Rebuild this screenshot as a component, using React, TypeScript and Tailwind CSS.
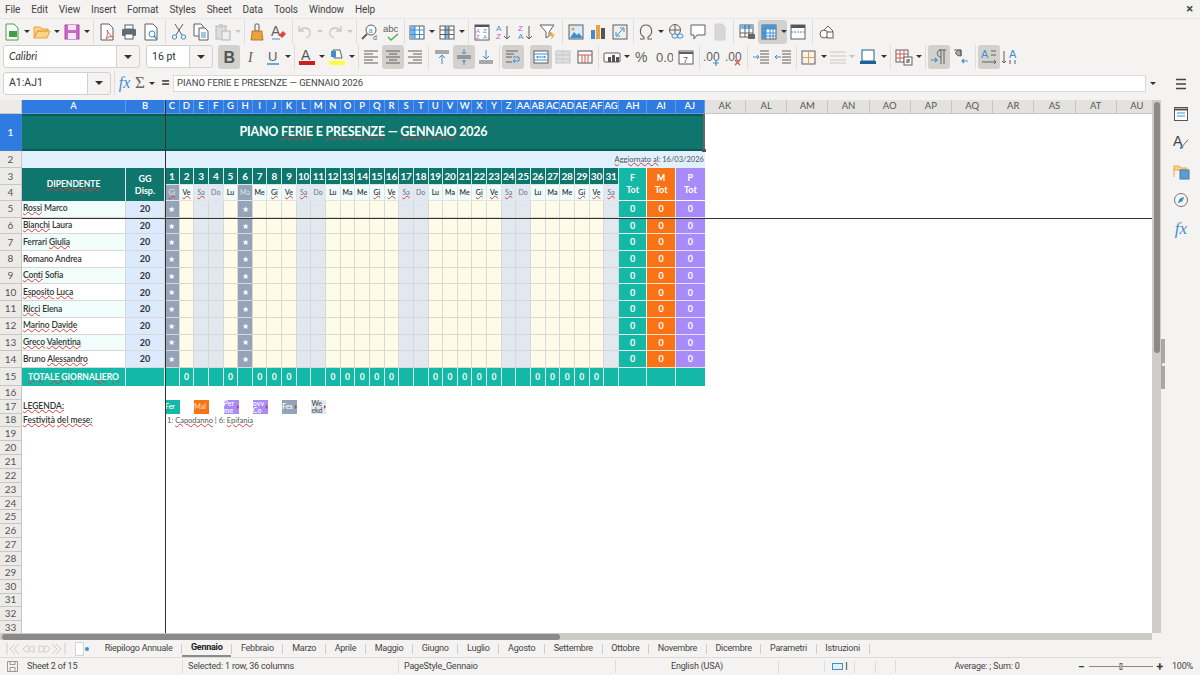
import React from 'react';

const UI = "font-['Roboto',sans-serif]";
const Svg = ({ children, s = 18 }: { children: React.ReactNode; s?: number }) => (
  <svg width={s} height={s} viewBox="0 0 18 18" fill="none" strokeWidth="1">{children}</svg>
);

const G = '#5f5f5f', B = '#3f8fd0', O = '#e8a33d';

// toolbar glyphs
const icons: Record<string, React.ReactNode> = {
  newdoc: <><path d="M3 1h8l4 4v12H3z" fill="#fff" stroke="#43a047" /><rect x="6" y="8" width="8" height="6" fill="#43a047" /></>,
  open: <path d="M1 15V4h6l2 2h6v2H5l-4 7 3-7h13l-3 7z" fill="#fbd38d" stroke={O} />,
  save: <><rect x="2" y="2" width="14" height="14" fill="#c868c8" stroke="#a84ca8" /><rect x="5" y="2" width="8" height="5" fill="#f5e6f5" /><rect x="5" y="10" width="8" height="6" fill="#f5e6f5" /></>,
  pdf: <><path d="M3 1h8l4 4v12H3z" fill="#fff" stroke={G} /><path d="M8 16c2-5 2-7 1-9 2 4 4 6 6 7-3-1-5 0-7 2z" stroke="#d9534f" /></>,
  print: <><rect x="5" y="2" width="8" height="4" fill="#fff" stroke={G} /><rect x="2" y="6" width="14" height="7" rx="1" fill="#5f6b76" /><rect x="5" y="11" width="8" height="5" fill="#fff" stroke={G} /></>,
  preview: <><path d="M3 1h8l4 4v12H3z" fill="#fff" stroke={G} /><circle cx="10" cy="11" r="3" stroke={B} /><path d="M12 13l3 3" stroke={B} strokeWidth="1.5" /></>,
  cut: <><path d="M5 1l7 11M13 1L6 12" stroke={G} /><circle cx="4.5" cy="14" r="2.2" stroke={B} /><circle cx="13.5" cy="14" r="2.2" stroke={B} /></>,
  copy: <><path d="M2 1h7l2 2v10H2z" fill="#fff" stroke={G} /><path d="M7 5h6l3 3v9H7z" fill="#fff" stroke={G} /><path d="M9 10h5M9 12h5M9 14h5" stroke={B} /></>,
  paste: <><rect x="2" y="3" width="10" height="13" fill="#ddd" stroke="#b5b5b5" /><rect x="5" y="1" width="4" height="4" fill="#ccc" /><rect x="8" y="8" width="8" height="9" fill="#eee" stroke="#b5b5b5" /></>,
  clone: <><rect x="7" y="1" width="4" height="7" rx="1" stroke={G} /><path d="M4 8h10v2l1 7H3l1-7z" fill={O} stroke="#b97a20" /></>,
  clear: <><text x="1" y="13" fontSize="14" fill={G} fontFamily="Liberation Sans">A</text><path d="M9 12l4-4 3 3-4 4z" fill="#e2453c" /><path d="M2 16h8" stroke={B} /></>,
  undo: <path d="M3 3v5h5M3 8c3-4 9-4 11 0 1 3-1 6-4 7" stroke="#c9c9c9" strokeWidth="1.3" />,
  redo: <path d="M15 3v5h-5M15 8c-3-4-9-4-11 0-1 3 1 6 4 7" stroke="#c9c9c9" strokeWidth="1.3" />,
  find: <><circle cx="10" cy="7" r="5" stroke={G} fill="#fff" /><path d="M6 11l-5 5" stroke={G} strokeWidth="2" /><text x="7.5" y="9.5" fontSize="7" fill={B} fontFamily="Liberation Sans">a</text><text x="12" y="17" fontSize="7" fill={G} fontFamily="Liberation Sans">d</text></>,
  spell: <><text x="0" y="9" fontSize="9.5" fill={G} fontFamily="Liberation Sans">abc</text><path d="M5 14l3 3 7-6" stroke="#4caf50" strokeWidth="1.4" /></>,
  table: <><rect x="2" y="3" width="14" height="13" fill="#fff" stroke={G} /><rect x="2" y="3" width="5" height="13" fill="#7cb6e6" /><path d="M2 7h14M2 11.500h14M7 3v13M11.500 3v13" stroke={B} /></>,
  cols: <><rect x="2" y="3" width="14" height="13" fill="#fff" stroke={G} /><rect x="7" y="3" width="4" height="13" fill="#7cb6e6" /><path d="M2 7h14M2 11.500h14M7 3v13M11 3v13" stroke={G} /></>,
  sort: <><rect x="2" y="2" width="14" height="15" fill="#fff" stroke={G} /><rect x="2" y="2" width="14" height="2" fill="#555" /><text x="3" y="10" fontSize="6" fill="#c060c0" fontFamily="Liberation Sans">A</text><text x="10" y="10" fontSize="6" fill={B} fontFamily="Liberation Sans">Z</text><text x="3" y="16" fontSize="6" fill="#c060c0" fontFamily="Liberation Sans">Z</text><text x="10" y="16" fontSize="6" fill={B} fontFamily="Liberation Sans">A</text></>,
  asc: <><text x="1" y="8" fontSize="8" fill={B} fontFamily="Liberation Sans">A</text><text x="1" y="16" fontSize="8" fill="#c060c0" fontFamily="Liberation Sans">Z</text><path d="M12 3v13M9 13l3 3 3-3" stroke={G} /></>,
  desc: <><text x="1" y="8" fontSize="8" fill="#c060c0" fontFamily="Liberation Sans">Z</text><text x="1" y="16" fontSize="8" fill={B} fontFamily="Liberation Sans">A</text><path d="M12 3v13M9 13l3 3 3-3" stroke={G} /></>,
  filter: <><path d="M1 2h14l-5 7v4l-3 2V9z" fill="#fff" stroke={G} /><path d="M11 9l3 1-1 2 3-1-4 6 1-4-3 0z" fill={O} /></>,
  image: <><rect x="2" y="2" width="14" height="14" fill="#dbeaf7" stroke={G} /><path d="M3 15l4-6 3 3 2-2 4 5z" fill={B} /><circle cx="6" cy="6" r="1.500" fill={O} /></>,
  chart: <><rect x="2" y="7" width="4" height="9" fill={B} /><rect x="7" y="2" width="4" height="14" fill={O} /><rect x="12" y="5" width="4" height="11" fill="#555" /></>,
  pivot: <><rect x="2" y="2" width="14" height="14" fill="#eee" stroke={G} /><path d="M6 12l6-6M9 5h4v4M5 9v4h4" stroke={B} /></>,
  omega: <path d="M3 16h4v-2c-6-3-4-12 2-12s8 9 2 12v2h4" stroke={G} strokeWidth="1.100" />,
  link: <><circle cx="8" cy="7" r="5.500" stroke={G} /><path d="M3 7h10M8 1.500v11" stroke={G} /><rect x="5" y="11" width="6" height="4" rx="2" fill="#f4f3f1" stroke={B} /><rect x="10" y="11" width="6" height="4" rx="2" stroke={B} /></>,
  comment: <path d="M2 2h14v10H8l-3 4v-4H2z" fill="#fff" stroke={G} />,
  headers: <path d="M4 1h7l3 3v13H4z" fill="#d8d8d8" stroke="#cfcfcf" />,
  freeze0: <><rect x="2" y="2" width="13" height="12" fill="#fff" stroke={G} /><rect x="2" y="2" width="13" height="4" fill="#7cb6e6" /><path d="M2 10h13M7 2v12M11 2v12" stroke={G} /><rect x="10" y="11" width="7" height="5" rx="1" fill="#666" /></>,
  freeze: <><rect x="2" y="2" width="14" height="14" fill="#fff" stroke={G} /><rect x="2" y="2" width="14" height="4" fill="#4a9bdc" /><rect x="2" y="2" width="4" height="14" fill="#4a9bdc" /><path d="M2 6h14M2 10h14M2 13h14M6 2v14M10 2v14M13 2v14" stroke={B} /></>,
  split: <><rect x="2" y="2" width="14" height="14" fill="#fff" stroke={G} /><rect x="2" y="2" width="14" height="3" fill="#555" /><path d="M2 9h14" stroke={B} strokeDasharray="2 1" /></>,
  shapes: <><path d="M10 3l5 5-5 5-5-5z" fill="#fff" stroke={G} /><circle cx="6" cy="11" r="4" fill="#fff" stroke={G} /><rect x="9" y="9" width="6" height="6" fill="#fff" stroke={G} /></>,
  italic: <text x="6" y="14" fontSize="14" fill={G} fontFamily="Liberation Serif" fontStyle="italic">I</text>,
  bold: <text x="3.500" y="15" fontSize="16" fill="#555" fontWeight="700" fontFamily="Liberation Sans">B</text>,
  under: <><text x="4" y="13" fontSize="13" fill={G} fontFamily="Liberation Sans">U</text><path d="M3 16h12" stroke={B} strokeWidth="1.500" /></>,
  fcolor: <><text x="3" y="12" fontSize="14" fill="#555" fontFamily="Liberation Sans">A</text><rect x="1" y="13" width="16" height="4" fill="#c9211e" /></>,
  bgcolor: <><path d="M5 2l7 0 2 8H6z" fill="#fff" stroke={G} /><path d="M3 3h5v6H3z" fill={B} /><rect x="1" y="13" width="16" height="4" fill="#ffff38" /></>,
  left: <path d="M2 3h14M2 6h9M2 9h14M2 12h9M2 15h14" stroke={G} />,
  center: <path d="M2 3h14M5 6h8M2 9h14M5 12h8M2 15h14" stroke={G} />,
  right: <path d="M2 3h14M7 6h9M2 9h14M7 12h9M2 15h14" stroke={G} />,
  top: <><path d="M2 3h14M2 5h14" stroke={G} /><path d="M9 16V8M6 10l3-3 3 3" stroke={B} /></>,
  middle: <><path d="M2 8h14M2 10h14" stroke={G} /><path d="M9 1v5M7 4l2 2 2-2M9 17v-5M7 14l2-2 2 2" stroke={B} /></>,
  bottom: <><path d="M2 13h14M2 15h14" stroke={G} /><path d="M9 2v8M6 8l3 3 3-3" stroke={B} /></>,
  wrap: <><path d="M2 3h12M2 6h8M2 9h6M2 14h6" stroke={G} /><path d="M9 9h6v4H9M11 11l-2 2 2 2" stroke={B} /></>,
  merge: <><rect x="2" y="3" width="14" height="12" fill="#fff" stroke={G} /><path d="M2 6h14M2 12h14M6 9h6" stroke={B} /><path d="M4 9l2-1.500v3zM14 9l-2-1.500v3z" fill={B} /></>,
  unmerge: <><rect x="2" y="3" width="14" height="12" fill="#e0e0e0" stroke="#c5c5c5" /><path d="M2 7h14M2 11h14M9 3v4M9 11v4" stroke="#c5c5c5" /></>,
  rows: <><rect x="2" y="3" width="14" height="12" fill="#fff" stroke="#555" /><path d="M2 7h14M6 7v8M9 7v8M12 7v8" stroke="#d9534f" /></>,
  format: <><rect x="1" y="5" width="16" height="9" rx="1" fill="#fff" stroke={G} /><rect x="5" y="9" width="3" height="5" fill="#555" /><rect x="9" y="7" width="3" height="7" fill="#555" /><rect x="13" y="9" width="3" height="5" fill="#555" /></>,
  pct: <text x="2" y="14" fontSize="14" fill={G} fontFamily="Liberation Sans">%</text>,
  num: <text x="1" y="14" fontSize="13" fill={G} fontFamily="Liberation Sans">0.0</text>,
  date: <><rect x="2" y="3" width="14" height="13" fill="#fff" stroke={G} /><path d="M2 5h14" stroke={G} strokeWidth="2" /><text x="6" y="15" fontSize="9" fill={G} fontFamily="Liberation Sans">7</text></>,
  addp: <><text x="0" y="13" fontSize="12" fill={G} fontFamily="Liberation Sans">.00</text><path d="M13 12v6M10 15h6" stroke={B} strokeWidth="1.200" /></>,
  delp: <><text x="0" y="13" fontSize="12" fill={G} fontFamily="Liberation Sans">.00</text><path d="M10 12l5 5M15 12l-5 5" stroke="#d9534f" strokeWidth="1.200" /></>,
  indent: <><path d="M8 3h9M8 6h9M8 9h9M8 12h9M8 15h9" stroke={G} /><path d="M1 9h6M5 7l2 2-2 2" stroke={B} /></>,
  outdent: <><path d="M8 3h9M8 6h9M8 9h9M8 12h9M8 15h9" stroke={G} /><path d="M7 9H1M3 7L1 9l2 2" stroke={B} /></>,
  borders: <><rect x="2" y="3" width="13" height="13" stroke={G} /><path d="M8.500 3v13" stroke={O} /><path d="M2 9.500h13" stroke={O} /></>,
  lines: <path d="M1 4h16M1 8h16M1 12h16M1 15h16" stroke="#c8c8c8" strokeWidth="1.200" />,
  bcolor: <><rect x="3" y="2" width="12" height="11" fill="#fff" stroke="#1f5f99" /><rect x="1" y="13" width="16" height="3" fill="#1f5f99" /></>,
  cond: <><rect x="1" y="2" width="12" height="12" fill="#fff" stroke={G} /><path d="M1 6h12M1 10h12M5 2v12M9 2v12" stroke="#d9534f" /><rect x="9" y="9" width="8" height="8" fill="#fff" stroke={G} /><path d="M11 12h4M11 14h4M14 11l-2 4" stroke={G} /></>,
  ltr: <><path d="M9 2h7M11 2v14M14 2v14M11 9c-5 0-5-7 0-7" stroke={G} /><path d="M1 12h6M5 10l2 2-2 2" stroke={B} strokeWidth="1.200" /></>,
  rtl: <><path d="M2 2h7v6c-7 0-7-6 0-6M9 2v6" stroke={G} fill="#aaa" /><path d="M16 13h-6M12 11l-2 2 2 2" stroke={B} strokeWidth="1.200" /></>,
  ahoriz: <><text x="1" y="10" fontSize="11" fill={B} fontFamily="Liberation Sans">A</text><path d="M11 3h5M11 7h5M2 14h14M14 12l2 2-2 2" stroke={G} /></>,
  avert: <><text x="8" y="10" fontSize="11" fill={B} fontFamily="Liberation Sans">A</text><path d="M3 3v12M1 13l2 2 2-2M9 12v4M14 12v4" stroke={G} /></>,
};

const Tool = ({ n, active, w = 'w-[22px]' }: { n: string; active?: boolean; w?: string }) => (
  <div className={`flex h-[24px] shrink-0 items-center justify-center rounded-[3px] ${w} ${active ? 'bg-[#d3d1cd]' : ''}`}>
    <Svg>{icons[n]}</Svg>
  </div>
);
const Dd = ({ w = 'w-[8px]', off }: { w?: string; off?: boolean }) => (
  <div className={`flex h-[24px] shrink-0 items-center justify-center ${w}`}>
    <span className={`h-0 w-0 border-x-[3px] border-t-[3px] border-x-transparent ${off ? 'border-t-[#c4c4c4]' : 'border-t-[#333]'}`} />
  </div>
);
const Sep = ({ w = 'w-[4px]' }: { w?: string }) => (
  <div className={`flex h-[24px] shrink-0 justify-center ${w}`}><span className="h-full w-px bg-[#dfdedb]" /></div>
);

const Row1 = () => (
  <div className="flex h-[25px] items-center pl-px">
    <Tool n="newdoc" /><Dd /><Tool n="open" /><Dd /><Tool n="save" /><Dd /><Sep w="w-[5px]" />
    <Tool n="pdf" /><Tool n="print" /><Tool n="preview" /><Sep w="w-[6px]" />
    <Tool n="cut" /><Tool n="copy" /><Tool n="paste" /><Dd off /><Sep w="w-[4px]" />
    <Tool n="clone" /><Tool n="clear" /><Sep />
    <Tool n="undo" /><Dd off /><Tool n="redo" /><Dd off /><Sep w="w-[5px]" />
    <Tool n="find" /><Tool n="spell" /><Sep w="w-[3px]" />
    <Tool n="table" /><Dd /><Tool n="cols" /><Dd /><Sep w="w-[5px]" />
    <Tool n="sort" /><Tool n="asc" /><Tool n="desc" /><Tool n="filter" /><Sep w="w-[6px]" />
    <Tool n="image" /><Tool n="chart" /><Tool n="pivot" /><Sep w="w-[4px]" />
    <Tool n="omega" /><Dd /><Tool n="link" /><Tool n="comment" /><Tool n="headers" /><Sep w="w-[5px]" />
    <Tool n="freeze0" /><div className="flex h-[24px] w-[29px] shrink-0 items-center rounded-[3px] bg-[#d3d1cd]"><Tool n="freeze" /><Dd w="w-[7px]" /></div>
    <Tool n="split" w="w-[21px]" /><Sep w="w-[8px]" /><Tool n="shapes" />
  </div>
);

const Combo = ({ text, w, tw, italic }: { text: string; w: string; tw: string; italic?: boolean }) => (
  <div className={`flex h-[23px] shrink-0 rounded-[3px] border border-[#d3d1cd] ${w}`}>
    <div className={`flex flex-1 items-center rounded-l-[3px] bg-white pl-[5px] text-[10.500px] text-[#333] ${italic ? "italic font-['Lato',sans-serif]" : ''}`}>{text}</div>
    <div className={`flex items-center justify-center border-l border-[#d3d1cd] ${tw}`}>
      <span className="h-0 w-0 border-x-[4px] border-t-[4px] border-x-transparent border-t-[#333]" />
    </div>
  </div>
);

const Row2 = () => (
  <div className="flex h-[25px] items-center pl-[3px]">
    <Combo text="Calibri" w="w-[137px]" tw="w-[23px]" italic />
    <div className="w-[6px] shrink-0" />
    <Combo text="16 pt" w="w-[67px]" tw="w-[23px]" />
    <div className="w-[5px] shrink-0" />
    <Tool n="bold" active /><Tool n="italic" /><Tool n="under" /><Dd /><Sep />
    <Tool n="fcolor" /><Dd /><Tool n="bgcolor" /><Dd /><Sep w="w-[4px]" />
    <Tool n="left" /><Tool n="center" active /><Tool n="right" /><Sep w="w-[5px]" />
    <Tool n="top" /><Tool n="middle" active /><Tool n="bottom" /><Sep w="w-[5px]" />
    <Tool n="wrap" active /><div className="w-[6px] shrink-0" /><Tool n="merge" active /><Tool n="unmerge" /><Tool n="rows" /><Sep w="w-[5px]" />
    <Tool n="format" /><Dd /><Tool n="pct" /><Tool n="num" /><Tool n="date" /><Sep w="w-[4px]" />
    <Tool n="addp" /><Tool n="delp" /><Sep w="w-[5px]" />
    <Tool n="indent" /><Tool n="outdent" /><Sep w="w-[4px]" />
    <Tool n="borders" /><Dd /><Tool n="lines" w="w-[20px]" /><Dd off /><Tool n="bcolor" w="w-[24px]" /><Dd /><Sep w="w-[5px]" />
    <Tool n="cond" /><Dd /><Sep w="w-[5px]" />
    <Tool n="ltr" active /><Tool n="rtl" /><Sep w="w-[6px]" /><Tool n="ahoriz" active /><Tool n="avert" w="w-[20px]" />
  </div>
);

const FormulaBar = () => (
  <div className="flex h-[28px] items-center pl-[3px]">
    <Combo text="A1:AJ1" w="w-[108px]" tw="w-[23px]" />
    <Sep w="w-[6px]" />
    <span className="w-[15px] text-center font-['Liberation_Serif',serif] text-[16px] italic text-[#3f8fd0]">fx</span>
    <span className="ml-[1px] w-[14px] text-center font-['Liberation_Serif',serif] text-[17px] text-[#666]">Σ</span>
    <Dd w="w-[10px]" />
    <span className="ml-[2px] w-[13px] text-center text-[16px] font-semibold leading-none text-[#555]">=</span>
    <div className="ml-[1px] flex h-[17px] w-[973px] items-center border border-[#dcdad6] bg-white pl-[3px] text-[9.500px] tracking-[-0.05px] text-[#444]">PIANO FERIE E PRESENZE — GENNAIO 2026</div>
    <Dd w="w-[14px]" />
  </div>
);

// ---- sheet data ----
const DAYS = ['Gi','Ve','Sa','Do','Lu','Ma','Me'];
const dayName = (d: number) => DAYS[(d - 1) % 7];
const isWe = (d: number) => { const n = dayName(d); return n === 'Sa' || n === 'Do'; };
const isHol = (d: number) => d === 1 || d === 6;
// [first, last, first misspelt, last misspelt]
const STAFF: [string, string, boolean, boolean][] = [
  ['Rossi','Marco',true,false],['Bianchi','Laura',true,false],['Ferrari','Giulia',false,true],['Romano','Andrea',false,false],
  ['Conti','Sofia',true,false],['Esposito','Luca',true,true],['Ricci','Elena',true,false],['Marino','Davide',true,true],
  ['Greco','Valentina',true,true],['Bruno','Alessandro',false,true],
];
const COLS = ['C','D','E','F','G','H','I','J','K','L','M','N','O','P','Q','R','S','T','U','V','W','X','Y','Z','AA','AB','AC','AD','AE','AF','AG'];
const REST = ['AK','AL','AM','AN','AO','AP','AQ','AR','AS','AT','AU'];
const DAY_NUMS = Array.from({ length: 31 }, (_, i) => i + 1);
const TOTAL_ZERO = [2,5,7,8,9,12,13,14,15,16,19,20,21,22,23,26,27,28,29,30];

const Wavy = ({ children, on = true }: { children: React.ReactNode; on?: boolean }) => (
  <span className={on ? 'underline decoration-[#d63c3c] decoration-wavy decoration-1 underline-offset-0' : ''}>{children}</span>
);

const RowH = ({ n, active }: { n: number; active?: boolean }) => (
  <div className={`flex items-center justify-center border-b border-r text-[10px] ${active ? 'border-[#3a7fd6] bg-[#2f7be0] font-semibold text-white' : 'border-[#c8c7c4] bg-[#ecebe8] text-[#555]'}`}>{n}</div>
);
const ColH = ({ n, blue = true }: { n: string; blue?: boolean }) => (
  <div className={`flex items-center justify-center overflow-hidden border-r border-b text-[9.500px] ${blue ? 'border-[#5c9ce8] bg-[#2f7be0] font-semibold text-white' : 'border-[#c8c7c4] bg-[#e3e2df] text-[#555]'}`}>{n}</div>
);
const Rest = () => <div className="col-span-11" />;

const cellCls = 'border-r border-b border-[#d9d8d4]';

const Legend = ({ cls, a, b, clip }: { cls: string; a: string; b: string; clip?: boolean }) => (
  <div className="col-span-2 flex items-center">
    <div className={`relative flex h-[14px] w-[15px] flex-col justify-center overflow-hidden text-[7px] font-semibold leading-[7px] ${cls}`}>
      <span>{a}</span>
      <span>{b}</span>
      {clip && <span className="absolute right-0 top-[5px] h-0 w-0 border-y-[2px] border-l-[2px] border-y-transparent border-l-[#c0392b]" />}
    </div>
  </div>
);

const Sheet = () => (
  <div className="relative h-[533px] w-[1152px] shrink-0 overflow-hidden bg-white font-['Lato',sans-serif]">
    <div className="grid grid-cols-[22px_104px_39px_repeat(31,14.645px)_28.500px_28.500px_29px_repeat(11,41.200px)] grid-rows-[14px_37px_17px_17px_16px_repeat(10,16.700px)_18px_repeat(18,13.850px)]">
      {/* column headers */}
      <div className="border-b border-r border-[#c8c7c4] bg-[#ecebe8]" />
      <ColH n="A" /><ColH n="B" />
      {COLS.map(c => <ColH key={c} n={c} />)}
      <ColH n="AH" /><ColH n="AI" /><ColH n="AJ" />
      {REST.map(c => <ColH key={c} n={c} blue={false} />)}

      {/* row 1: title */}
      <RowH n={1} active />
      <div className="col-span-36 flex items-center justify-center border-y-2 border-[#0b5a55] bg-[#0f766e] text-[12.500px] font-bold tracking-[-0.25px] text-white">
        <span>PIANO <Wavy>FERIE</Wavy> E <Wavy>PRESENZE</Wavy> — <Wavy>GENNAIO</Wavy> 2026</span>
      </div>
      <Rest />

      {/* row 2 */}
      <RowH n={2} />
      <div className="col-span-36 flex items-center justify-end bg-[#e0f0fd] pr-[1px] text-[7.500px] text-[#555]">
        <span><Wavy>Aggiornato al</Wavy>: 16/03/2026</span>
      </div>
      <Rest />

      {/* row 3 & 4 */}
      <RowH n={3} />
      <div className="row-span-2 flex items-center justify-center border-r border-[#d5e8e4] bg-[#0f766e] text-[8.500px] font-bold text-white"><Wavy>DIPENDENTE</Wavy></div>
      <div className="row-span-2 flex flex-col items-center justify-center border-r border-[#d5e8e4] bg-[#0f766e] text-[9px] font-bold leading-[12px] text-white"><span>GG</span><Wavy>Disp.</Wavy></div>
      {DAY_NUMS.map(d => (
        <div key={d} className="flex items-center justify-center border-r border-b border-[#d5e8e4] bg-[#0f766e] text-[10px] font-bold tracking-[-0.2px] text-white">{d}</div>
      ))}
      <div className="row-span-2 flex flex-col items-center justify-center border-r border-b border-white bg-[#14b8a6] text-[9px] font-bold leading-[12px] text-white"><span>F</span><span>Tot</span></div>
      <div className="row-span-2 flex flex-col items-center justify-center border-r border-b border-white bg-[#f97316] text-[9px] font-bold leading-[12px] text-white"><span>M</span><span>Tot</span></div>
      <div className="row-span-2 flex flex-col items-center justify-center border-b border-white bg-[#a78bfa] text-[9px] font-bold leading-[12px] text-white"><span>P</span><span>Tot</span></div>
      <Rest />

      <RowH n={4} />
      {DAY_NUMS.map(d => {
        const n = dayName(d);
        const we = isWe(d);
        const hol = isHol(d);
        return (
          <div key={d} className={`flex items-center justify-center border-r border-b border-[#dde5e5] text-[7px] ${hol ? 'bg-[#94a3b8] text-[#dfe5ee]' : we ? 'bg-[#e2e8f0] text-[#64748b]' : 'bg-[#f0fdfa] font-semibold text-[#333]'}`}>
            <Wavy on={n === 'Gi' || n === 'Ve' || n === 'Sa'}>{n}</Wavy>
          </div>
        );
      })}
      <Rest />

      {/* rows 5-14 */}
      {STAFF.map(([first, last, w1, w2], i) => (
        <React.Fragment key={first}>
          <RowH n={i + 5} />
          <div className={`flex items-center pl-[1px] text-[8.500px] font-semibold tracking-[-0.1px] text-[#333] ${cellCls} ${i % 2 === 0 ? 'bg-[#f0fdfa]' : 'bg-white'}`}>
            <span><Wavy on={w1}>{first}</Wavy> <Wavy on={w2}>{last}</Wavy></span>
          </div>
          <div className={`flex items-center justify-center bg-[#dbeafe] text-[9px] font-bold text-[#333] ${cellCls}`}>20</div>
          {DAY_NUMS.map(d => (
            <div key={d} className={`flex items-center justify-center text-[8px] text-white ${cellCls} ${isHol(d) ? 'bg-[#94a3b8]' : isWe(d) ? 'bg-[#e2e8f0]' : 'bg-[#fefce8]'}`}>
              {isHol(d) ? '★' : ''}
            </div>
          ))}
          <div className="flex items-center justify-center border-r border-b border-[#e8f5f3] bg-[#14b8a6] text-[9px] font-bold text-white">0</div>
          <div className="flex items-center justify-center border-r border-b border-[#fbe3d0] bg-[#f97316] text-[9px] font-bold text-white">0</div>
          <div className="flex items-center justify-center border-b border-[#e8e2fb] bg-[#a78bfa] text-[9px] font-bold text-white">0</div>
          <Rest />
        </React.Fragment>
      ))}

      {/* row 15 */}
      <RowH n={15} />
      <div className="flex items-center whitespace-nowrap border-r border-[#d5f2ee] bg-[#14b8a6] pl-[6px] text-[8.500px] font-bold text-white"><Wavy>TOTALE GIORNALIERO</Wavy></div>
      <div className="border-r border-[#d5f2ee] bg-[#14b8a6]" />
      {DAY_NUMS.map(d => (
        <div key={d} className="flex items-center justify-center border-r border-[#d5f2ee] bg-[#14b8a6] text-[8.500px] font-bold text-white">{TOTAL_ZERO.includes(d) ? '0' : ''}</div>
      ))}
      <div className="border-r border-[#d5f2ee] bg-[#14b8a6]" />
      <div className="border-r border-[#d5f2ee] bg-[#14b8a6]" />
      <div className="bg-[#14b8a6]" />
      <Rest />

      {/* row 16 */}
      <RowH n={16} />
      <div className="col-span-47" />

      {/* row 17: legend */}
      <RowH n={17} />
      <div className="flex items-center pl-[1px] text-[8.500px] font-semibold text-[#333]"><Wavy>LEGENDA:</Wavy></div>
      <div />
      <Legend cls="bg-[#14b8a6] text-white" a="" b="Fer" />
      <Legend cls="bg-[#f97316] text-[#ffd9b8]" a="" b="Mal" />
      <Legend cls="bg-[#a78bfa] text-white" a="Per" b="me" clip />
      <Legend cls="bg-[#a78bfa] text-white" a="ovv" b="Co" clip />
      <Legend cls="bg-[#94a3b8] text-white" a="" b="Fes" clip />
      <Legend cls="bg-[#e2e8f0] text-[#555]" a="We" b="ekd" clip />
      <div className="col-span-33" />

      {/* row 18 */}
      <RowH n={18} />
      <div className="col-span-2 flex items-center pl-[1px] text-[8.500px] font-semibold text-[#333]"><span><Wavy>Festività</Wavy> <Wavy>del mese:</Wavy></span></div>
      <div className="col-span-45 flex items-center pl-[2px] text-[7.500px] text-[#555]"><span>1: <Wavy>Capodanno</Wavy> | 6: <Wavy>Epifania</Wavy></span></div>

      {Array.from({ length: 15 }, (_, i) => i + 19).map(n => (
        <React.Fragment key={n}>
          <RowH n={n} />
          <div className="col-span-47" />
        </React.Fragment>
      ))}
    </div>
    {/* freeze pane lines */}
    <div className="absolute top-0 bottom-0 left-[165px] w-px bg-[#333]" />
    <div className="absolute left-[22px] right-0 top-[118px] h-px bg-[#333]" />
    {/* selection handle */}
    <div className="absolute left-[703px] top-[14px] h-[37px] w-[2px] bg-[#666]" />
    <div className="absolute left-[702px] top-[49px] h-[3px] w-[4px] bg-[#555]" />
  </div>
);

const TABS = ['Riepilogo Annuale','Gennaio','Febbraio','Marzo','Aprile','Maggio','Giugno','Luglio','Agosto','Settembre','Ottobre','Novembre','Dicembre','Parametri','Istruzioni'];

const TabBar = () => (
  <div className="flex h-[18px] items-center border-b border-[#dddbd7] pl-[6px]">
    <svg width="60" height="14" viewBox="0 0 60 14" fill="none" stroke="#cfcdc9">
      <path d="M1 1v12M9 2L4 7l5 5M13 2L8 7l5 5M20 4l-3 3 3 3h3V4zM26 4l-3 3 3 3h2V4zM33 4v6h3l3-3-3-3zM38 4v6h3l3-3-3-3zM46 2l5 5-5 5M50 2l5 5-5 5M59 1v12" />
    </svg>
    <div className="ml-[9px] h-[14px] w-[9px] border border-[#d5d3cf] bg-white" />
    <span className="ml-[1px] h-[4px] w-[4px] rounded-full bg-[#3f8fd0]" />
    <div className="ml-[7px] flex h-full items-center text-[9px] tracking-[-0.25px] text-[#444]">
      {TABS.map(t => (
        <div key={t} className="flex h-full items-center">
          <div className={`flex h-full items-center px-[8.700px] ${t === 'Gennaio' ? 'border-b-2 border-[#8a8a8a] font-bold text-[#222]' : ''}`}>{t}</div>
          <span className="h-[10px] w-px bg-[#cfcdc9]" />
        </div>
      ))}
    </div>
  </div>
);

const StatusBar = () => (
  <div className="flex h-[17px] items-center text-[9px] tracking-[-0.2px] text-[#444]">
    <div className="flex w-[182px] shrink-0 items-center pl-[7px]">
      <svg width="11" height="11" viewBox="0 0 11 11" fill="none" stroke="#999"><path d="M.5.5h10v10H.5zM3 .5v3h5v-3M3 10.500V6.500h5v4" /></svg>
      <span className="ml-[9px]">Sheet 2 of 15</span>
    </div>
    <div className="w-[216px] shrink-0 border-l border-[#dddbd7] pl-[5px]">Selected: 1 row, 36 columns</div>
    <div className="w-[217px] shrink-0 border-l border-[#dddbd7] pl-[5px]">PageStyle_Gennaio</div>
    <div className="w-[163px] shrink-0 border-l border-[#dddbd7] text-center">English (USA)</div>
    <div className="h-[12px] w-[46px] shrink-0 border-l border-[#dddbd7]" />
    <div className="flex w-[30px] shrink-0 items-center border-l border-[#dddbd7] pl-[7px] text-[#555]">
      <span className="h-[7px] w-[11px] border border-[#3f8fd0] bg-[#e4eef7]" /><span className="ml-[2px] text-[11px] leading-none">I</span>
    </div>
    <div className="h-[12px] w-[21px] shrink-0 border-l border-[#dddbd7]" />
    <div className="h-[12px] w-[20px] shrink-0 border-l border-[#dddbd7]" />
    <div className="w-[183px] shrink-0 border-l border-[#dddbd7] text-center">Average: ; Sum: 0</div>
    <div className="flex w-[85px] shrink-0 items-center justify-between text-[12px] font-semibold leading-none text-[#333]">
      <span>−</span>
      <div className="relative mx-[4px] h-px flex-1 bg-[#888]"><span className="absolute left-1/2 top-[-3px] h-[7px] w-[3px] -translate-x-1/2 border border-[#666] bg-white" /></div>
      <span>+</span>
    </div>
    <div className="ml-[9px]">100%</div>
  </div>
);

const SideBar = () => (
  <div className="flex flex-1 flex-col items-center pt-[7px] pr-[3px]">
    <svg width="16" height="16" viewBox="0 0 16 16" stroke="#444" strokeWidth="1.500"><path d="M3 3.500h10M3 8h10M3 12.500h10" /></svg>
    <div className="mt-[14px] flex flex-col items-center gap-[12px]">
      <svg width="16" height="16" viewBox="0 0 16 16" fill="#fff" stroke="#555"><rect x="1.500" y="1.500" width="13" height="13" /><path d="M1.500 3.500h13" strokeWidth="2" /><path d="M4 7h8M4 10h8" stroke="#3f8fd0" /></svg>
      <svg width="17" height="17" viewBox="0 0 18 18" fill="none"><text x="0" y="13" fontSize="15" fill="#444" fontFamily="Liberation Sans">A</text><path d="M16 6l-6 7" stroke="#666" /><path d="M8 13c2-1 3 0 3 1s-2 2-4 2c1-1 0-2 1-3z" fill="#3f8fd0" /></svg>
      <svg width="17" height="17" viewBox="0 0 17 17" fill="#fbd38d" stroke="#e8a33d"><path d="M1 14V3h5l2 2h6v2H1" /><rect x="7" y="7" width="9" height="9" fill="#5d9bd3" stroke="#3f7fb5" /></svg>
      <svg width="16" height="16" viewBox="0 0 16 16" fill="none" stroke="#777"><circle cx="8" cy="8" r="6.500" /><path d="M5.500 10.500L7 7l3.500-1.500L9 9z" fill="#3f8fd0" stroke="#3f8fd0" /></svg>
      <span className="text-center font-['Liberation_Serif',serif] text-[17px] italic leading-none text-[#3f8fd0]">fx</span>
    </div>
  </div>
);

export default function App() {
  return (
    <div className={`flex h-[675px] w-[1200px] flex-col overflow-hidden bg-[#f4f3f1] ${UI}`}>
      {/* menu */}
      <div className="relative flex h-[18px] items-center gap-[11px] pl-[5px] text-[10px] tracking-[-0.1px] text-[#444]">
        {['File','Edit','View','Insert','Format','Styles','Sheet','Data','Tools','Window','Help'].map(m => <span key={m}>{m}</span>)}
        <span className="absolute right-[7px] top-[2px] text-[13px] font-bold leading-[14px] text-[#444]">×</span>
      </div>
      <div className="border-t border-[#e8e7e4]" />
      <Row1 />
      <Row2 />
      <div className="flex min-h-0 flex-1">
        <div className="flex w-[1161px] shrink-0 flex-col">
          <FormulaBar />
          <div className="h-[3px]" />
          <div className="flex">
            <Sheet />
            {/* vertical scrollbar */}
            <div className="flex h-[533px] w-[9px] shrink-0 items-start justify-center bg-[#cfcdca] pt-[2px]">
              <div className="h-[251px] w-[6px] rounded-[3px] bg-[#8a8a8a]" />
            </div>
          </div>
          {/* horizontal scrollbar */}
          <div className="flex h-[7px] w-[1152px] items-center bg-[#cbcac7] pl-[2px]">
            <div className="h-[6px] w-[558px] rounded-[3px] bg-[#8a8a8a]" />
          </div>
          <TabBar />
        </div>
        {/* sidebar grip */}
        <div className="flex w-[4px] shrink-0 flex-col pt-[270px]">
          <div className="flex h-[50px] w-[4px] items-center justify-center bg-[#a9a8a5]"><span className="h-[3px] w-[3px] rounded-full bg-white" /></div>
        </div>
        <SideBar />
      </div>
      <StatusBar />
    </div>
  );
}
